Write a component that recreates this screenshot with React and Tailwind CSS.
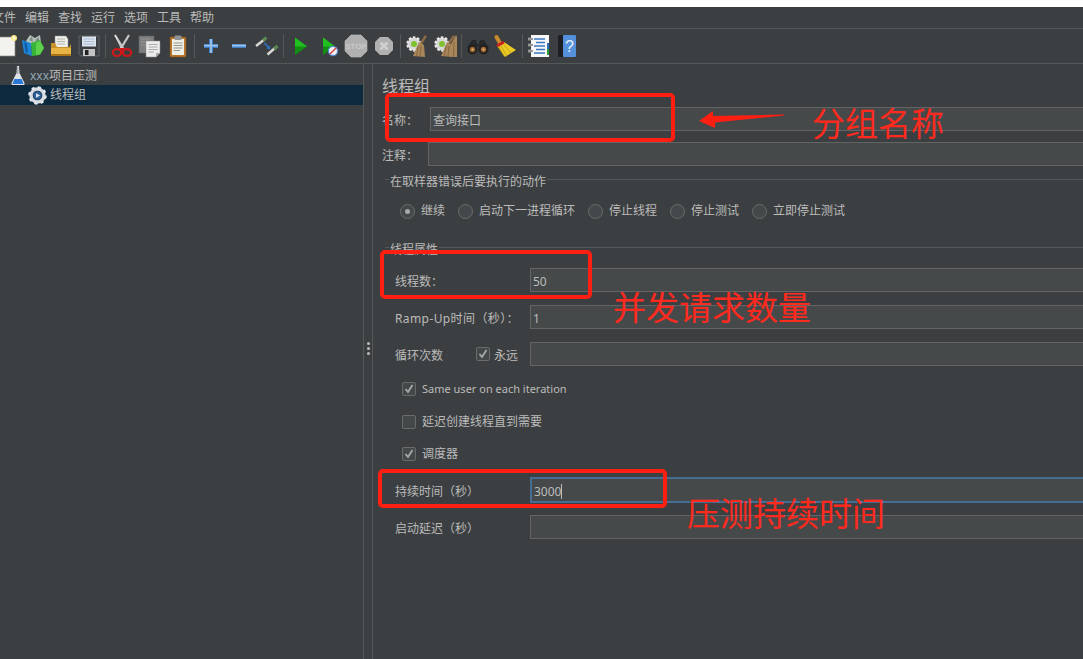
import React from "react";

const cjk = "font-['Noto_Sans','Noto_Sans_CJK_SC',sans-serif]";

function NewIcon() {
  return (
    <svg width="24" height="24" viewBox="0 0 24 24">
      <rect x="2" y="3" width="20" height="19" fill="#f2f2ee" stroke="#8a8a86" strokeWidth="0.7" />
      <circle cx="21" cy="4" r="3" fill="#f7e98a" />
      <circle cx="21" cy="4" r="1.4" fill="#fffbd0" />
    </svg>
  );
}

function TemplatesIcon() {
  return (
    <svg width="24" height="24" viewBox="0 0 24 24">
      <path d="M5 7 L9 1 L14 4 L19 1 L20 9 L10 12Z" fill="#b9c2bd" />
      <path d="M8 6 L11 2 L12 8Z M14 6 L18 3 L18 9Z" fill="#7f8f88" />
      <path d="M1 6 L10 9 L11 22 L3 19Z" fill="#1f86d8" />
      <path d="M3 8 L6 9.5 L7 19 L4.5 18Z" fill="#0e5fa8" />
      <path d="M10 9 L19 6 L23 14 L19 21 L11 22Z" fill="#38b43a" />
      <path d="M15 9 L19 7 L23 14 L19 20 L15 21Z" fill="#5fd04a" />
    </svg>
  );
}

function OpenIcon() {
  return (
    <svg width="24" height="24" viewBox="0 0 24 24">
      <path d="M6 2 H17 L19 5 V14 H6Z" fill="#eeeeea" stroke="#9a9a96" strokeWidth="0.5" />
      <path d="M8 5 H16 M8 7.5 H16 M8 10 H16" stroke="#a5a5a0" strokeWidth="0.8" />
      <path d="M2 9 H6 L8 13 H20 L22 10 V20 Q22 22 20 22 H4 Q2 22 2 20Z" fill="#c8922a" />
      <path d="M2 14 H22 V20 Q22 22 20 22 H4 Q2 22 2 20Z" fill="#e7b445" />
      <path d="M2 20 H22 Q22 22 20 22 H4 Q2 22 2 20Z" fill="#a87416" />
    </svg>
  );
}

function SaveIcon() {
  return (
    <svg width="24" height="24" viewBox="0 0 24 24">
      <path d="M2 2 H22 V22 H4 L2 20Z" fill="#3b3e42" stroke="#6a6d70" strokeWidth="0.8" />
      <rect x="5" y="2.5" width="14" height="10" fill="#dfe6ee" />
      <path d="M6.5 5 H17.5 M6.5 7.5 H17.5 M6.5 10 H17.5" stroke="#9fb7d2" strokeWidth="0.9" />
      <rect x="6" y="15" width="12" height="7" fill="#c4c4c4" />
      <rect x="8" y="16" width="3.5" height="5" fill="#202020" />
    </svg>
  );
}

function CutIcon() {
  return (
    <svg width="24" height="24" viewBox="0 0 24 24">
      <path d="M5 1 L13.5 15 M19 1 L10.5 15" stroke="#c8c8c8" strokeWidth="2.2" />
      <path d="M5 1 L11 14" stroke="#f0f0f0" strokeWidth="0.7" />
      <ellipse cx="7" cy="18.5" rx="4.2" ry="3.4" fill="none" stroke="#d01818" strokeWidth="2.2" />
      <ellipse cx="17" cy="18.5" rx="4.2" ry="3.4" fill="none" stroke="#d01818" strokeWidth="2.2" />
      <path d="M10 15 L14 15" stroke="#d01818" strokeWidth="2" />
    </svg>
  );
}

function CopyIcon() {
  return (
    <svg width="24" height="24" viewBox="0 0 24 24">
      <rect x="1" y="2" width="15" height="17" fill="#7d7d7d" stroke="#666" strokeWidth="0.5" />
      <path d="M3 5 H13 M3 8 H13 M3 11 H13" stroke="#9a9a9a" strokeWidth="0.8" />
      <path d="M8 7 H22 V19 L18 23 H8Z" fill="#ececec" stroke="#8c8c8c" strokeWidth="0.5" />
      <path d="M18 23 V19 H22Z" fill="#a8a8a8" />
      <path d="M10.5 10.5 H19.5 M10.5 13 H19.5 M10.5 15.5 H19.5 M10.5 18 H16" stroke="#9a9a9a" strokeWidth="0.8" />
    </svg>
  );
}

function PasteIcon() {
  return (
    <svg width="24" height="24" viewBox="0 0 24 24">
      <rect x="4" y="3" width="16" height="20" rx="1" fill="#b9772a" stroke="#7d4d17" strokeWidth="0.5" />
      <rect x="6" y="5" width="12" height="16" fill="#efefe8" />
      <rect x="8.5" y="1.5" width="7" height="4.5" rx="1" fill="#8f9296" />
      <path d="M7.5 9 H16.5 M7.5 11.5 H16.5 M7.5 14 H16.5 M7.5 16.5 H14" stroke="#8d8d88" strokeWidth="0.9" />
    </svg>
  );
}

function PlusIcon() {
  return (
    <svg width="24" height="24" viewBox="0 0 24 24">
      <path d="M5 12 H19 M12 5 V19" stroke="#3e7ec2" strokeWidth="4" />
      <path d="M5 11.6 H19 M12 5 V19" stroke="#9cc4ec" strokeWidth="1.8" />
    </svg>
  );
}

function MinusIcon() {
  return (
    <svg width="24" height="24" viewBox="0 0 24 24">
      <path d="M5 12 H19" stroke="#3e7ec2" strokeWidth="4" />
      <path d="M5 11.6 H19" stroke="#9cc4ec" strokeWidth="1.8" />
    </svg>
  );
}

function ToggleIcon() {
  return (
    <svg width="24" height="24" viewBox="0 0 24 24">
      <path d="M1 12 L10 5" stroke="#d8d8d8" strokeWidth="2.4" />
      <path d="M8 6.5 L11.5 3.5" stroke="#5d8a52" strokeWidth="3" />
      <path d="M12.5 20.5 L20 14" stroke="#d8d8d8" strokeWidth="2.4" />
      <path d="M19 15 L22.5 12" stroke="#5d8a52" strokeWidth="3" />
      <path d="M9.5 9 L14 14" stroke="#2f78c8" strokeWidth="1.6" />
      <path d="M15.5 15.5 L11.5 14.5 L14.5 11.5Z" fill="#2f78c8" />
    </svg>
  );
}

function PlayIcon({ noTimer }) {
  return (
    <svg width="24" height="24" viewBox="0 0 24 24">
      <path d="M7 3.5 L19 12.5 L7 21Z" fill="#148f14" />
      <path d="M7 3.5 L19 12.5 L7 12.5Z" fill="#1fc01f" />
      {noTimer && (
        <g>
          <circle cx="17" cy="17" r="4.6" fill="#f2f2f2" stroke="#4f86d0" strokeWidth="1.2" />
          <path d="M14 20 L20 14" stroke="#d83a3a" strokeWidth="1.4" />
        </g>
      )}
    </svg>
  );
}

function StopIcon() {
  return (
    <svg width="24" height="24" viewBox="0 0 24 24">
      <path d="M7 1 H17 L23 7 V17 L17 23 H7 L1 17 V7Z" fill="#b0b0b0" stroke="#c0c0c0" strokeWidth="0.6" />
      <text x="12" y="15" textAnchor="middle" fontSize="8" fontWeight="700" fontFamily="Liberation Sans" fill="#c8c8c8">STOP</text>
    </svg>
  );
}

function ShutdownIcon() {
  return (
    <svg width="24" height="24" viewBox="0 0 24 24">
      <path d="M8 3 H16 L21 8 V16 L16 21 H8 L3 16 V8Z" fill="#b0b0b0" />
      <path d="M8.5 8.5 L15.5 15.5 M15.5 8.5 L8.5 15.5" stroke="#cecece" strokeWidth="3" />
    </svg>
  );
}

function ClearIcon({ all }) {
  return (
    <svg width="24" height="24" viewBox="0 0 24 24">
      <circle cx="9" cy="10" r="6.5" fill="#d6d6d6" stroke="#e8e8e8" strokeWidth="2.4" strokeDasharray="2.5 1.6" />
      <circle cx="9" cy="10" r="3" fill="#7fc02e" />
      <path d="M20 1 L22 2.5 L17 10 L15 8.5Z" fill="#8a6a45" />
      <path d="M14 8 L19 11 L20 23 L8 22 Z" fill="#a98659" />
      <path d="M13 12 L11.5 22 M16 12 L15 22" stroke="#7d5f3b" strokeWidth="0.8" />
      {all && <path d="M23 1 L24 3 L24 23 L18 23 L18 10Z" fill="#a98659" />}
      {all && <path d="M21 8 L20.5 23" stroke="#7d5f3b" strokeWidth="0.8" />}
    </svg>
  );
}

function SearchIcon() {
  return (
    <svg width="24" height="24" viewBox="0 0 24 24">
      <path d="M6 6 H10 L11 10 H13 L14 6 H18 L23 14 H14 L12 12 L10 14 H1Z" fill="#26282a" />
      <circle cx="6.5" cy="15.5" r="5" fill="#222" />
      <circle cx="17.5" cy="15.5" r="5" fill="#222" />
      <circle cx="6.5" cy="15.5" r="2.7" fill="#a3662e" />
      <circle cx="17.5" cy="15.5" r="2.7" fill="#a3662e" />
      <circle cx="6.5" cy="15.5" r="1" fill="#e5c79d" />
      <circle cx="17.5" cy="15.5" r="1" fill="#e5c79d" />
    </svg>
  );
}

function BroomIcon() {
  return (
    <svg width="24" height="24" viewBox="0 0 24 24">
      <path d="M2.5 3 L6.5 10" stroke="#c98a2e" strokeWidth="4" strokeLinecap="round" />
      <path d="M3 12 L10 8 L22 16 L11 23Z" fill="#ecc925" />
      <path d="M3 12 L10 8" stroke="#c82020" strokeWidth="2.6" />
      <path d="M7 12 L13 22 M10 11 L17 19 M5 13 L10 22" stroke="#b99a10" strokeWidth="0.8" />
    </svg>
  );
}

function ListIcon() {
  return (
    <svg width="24" height="24" viewBox="0 0 24 24">
      <rect x="4" y="1" width="18" height="22" fill="#f8f8f8" />
      <rect x="20" y="9" width="2" height="6" fill="#2a6fc0" />
      <rect x="20" y="15" width="2" height="6" fill="#2f9a3a" />
      <path d="M7 5 H18 M9 8.5 H18 M7 12 H18 M9 15.5 H18 M7 19 H18" stroke="#3a78c4" strokeWidth="1.3" />
      <path d="M1 5 H6 M1 11 H6 M1 17 H6" stroke="#d8d8d8" strokeWidth="2.6" />
      <path d="M1 5 H6 M1 11 H6 M1 17 H6" stroke="#333" strokeWidth="0.8" />
    </svg>
  );
}

function HelpIcon() {
  return (
    <svg width="24" height="24" viewBox="0 0 24 24">
      <rect x="3" y="1" width="18" height="22" rx="1.5" fill="#1d1f22" />
      <rect x="8" y="1" width="13" height="22" rx="1" fill="#5591db" />
      <text x="14.5" y="18" textAnchor="middle" fontSize="16" fontFamily="Liberation Sans" fill="#e8f0fb">?</text>
    </svg>
  );
}

function FlaskIcon() {
  return (
    <svg width="14" height="19" viewBox="0 0 14 19">
      <path d="M6 0 L8 0 L8.5 7 L13.5 17 Q14 19 12.5 19 L1.5 19 Q0 19 0.5 17 L5.5 7Z" fill="#dfe3e8" />
      <path d="M3.4 13 H10.6 L12.6 18 H1.4Z" fill="#2a78d8" />
      <path d="M6.8 1 V8" stroke="#8b929a" strokeWidth="1" />
    </svg>
  );
}

function GearIcon() {
  return (
    <svg width="19" height="19" viewBox="0 0 19 19">
      <circle cx="9.5" cy="9.5" r="6.5" fill="none" stroke="#d8dde3" strokeWidth="3.4" />
      <circle cx="9.5" cy="9.5" r="8.2" fill="none" stroke="#e4e8ec" strokeWidth="2.2" strokeDasharray="3.2 3.24" />
      <circle cx="9.5" cy="9.5" r="4.2" fill="#2f5f98" />
      <path d="M8 7.2 L12.2 9.5 L8 11.8Z" fill="#dbe6f2" />
    </svg>
  );
}

const toolbar = [
  [NewIcon, TemplatesIcon, OpenIcon, SaveIcon],
  [CutIcon, CopyIcon, PasteIcon],
  [PlusIcon, MinusIcon, ToggleIcon],
  [PlayIcon, () => <PlayIcon noTimer />, StopIcon, ShutdownIcon],
  [ClearIcon, () => <ClearIcon all />],
  [SearchIcon, BroomIcon],
  [ListIcon, HelpIcon],
];

function Toolbar() {
  return (
    <div className="flex h-[35px] items-center ml-[-9px] border-b border-[#555859]">
      {toolbar.map((group, i) => (
        <div key={i} className="flex items-center">
          {i > 0 && <div className="mx-[2px] h-[24px] w-px bg-[#555859]" />}
          {group.map((Icon, j) => (
            <div key={j} className="flex w-[28px] justify-center">
              <Icon />
            </div>
          ))}
        </div>
      ))}
    </div>
  );
}

function Field({ label, value, focused, labelClass = "w-[148px] pl-[13px]" }) {
  return (
    <div className="flex items-center">
      <span className={`shrink-0 pt-[3px] ${labelClass}`}>{label}</span>
      <TextBox value={value} focused={focused} />
    </div>
  );
}

function TextBox({ value, focused }) {
  return (
    <div
      className={`mr-[-10px] flex flex-1 items-center bg-[#45494a] pt-[3px] ${
        focused ? "h-[26px] border-2 border-[#466d94] pl-[2px]" : "h-[24px] border border-[#646464] pl-[2px]"
      }`}
    >
      {value}
      {focused && <span className="h-[15px] w-px bg-[#bbbbbb]" />}
    </div>
  );
}

function Radio({ label, checked }) {
  return (
    <div className="flex items-center gap-[6px]">
      <span className="flex h-[15px] w-[15px] items-center justify-center rounded-full border border-[#6b6b6b] bg-[#43494a]">
        {checked && <span className="h-[5px] w-[5px] rounded-full bg-[#a9a9a9]" />}
      </span>
      <span>{label}</span>
    </div>
  );
}

function Check({ label, checked, latin, tight }) {
  return (
    <div className={`flex items-center ${tight ? "gap-[4px]" : "gap-[6px]"}`}>
      <span className="flex h-[14px] w-[14px] items-center justify-center rounded-[2px] border border-[#6b6b6b] bg-[#43494a]">
        {checked && (
          <svg width="10" height="10" viewBox="0 0 10 10">
            <path d="M1.5 5 L4 8 L8.5 1" fill="none" stroke="#a9a9a9" strokeWidth="1.8" />
          </svg>
        )}
      </span>
      <span className={latin ? "text-[11px]" : tight ? "pt-[4px]" : ""}>{label}</span>
    </div>
  );
}

function Legend({ children }) {
  return (
    <div className="ml-[3px] flex h-[16px] items-center">
      <div className="h-px w-[4px] bg-[#555859]" />
      <span className="px-px pt-[5px]">{children}</span>
      <div className="h-px flex-1 bg-[#555859]" />
    </div>
  );
}

export default function App() {
  return (
    <div className={`relative h-[659px] w-[1083px] overflow-hidden bg-[#3c3f41] text-[12px] text-[#bbbbbb] ${cjk}`}>
      <div className="h-[7px] bg-white" />
      <div className="flex h-[22px] items-center gap-[9px] ml-[-8px] pt-[1px] border-b border-[#555859]">
        {["文件", "编辑", "查找", "运行", "选项", "工具", "帮助"].map((m) => (
          <span key={m}>{m}</span>
        ))}
      </div>
      <Toolbar />
      <div className="flex h-[595px]">
        <div className="w-[363px] pt-[2px]">
          <div className="flex h-[19px] items-center gap-[5px] pl-[11px]">
            <FlaskIcon />
            <span>
              <span className="text-[#8fa6b8]">xxx</span>项目压测
            </span>
          </div>
          <div className="flex h-[20px] items-center gap-[3px] bg-[#0d293e] pl-[28px]">
            <GearIcon />
            <span>线程组</span>
          </div>
        </div>
        <div className="flex w-[10px] items-center justify-center border-x border-[#555859] pb-[27px]">
          <div className="flex flex-col gap-[2px]">
            <span className="h-[3px] w-[3px] rounded-full bg-[#bbbbbb]" />
            <span className="h-[3px] w-[3px] rounded-full bg-[#bbbbbb]" />
            <span className="h-[3px] w-[3px] rounded-full bg-[#bbbbbb]" />
          </div>
        </div>
        <div className="flex-1 pl-[9px] pt-[12px]">
          <div className="h-[31px] text-[16px] leading-[20px]">线程组</div>
          <Field label="名称：" value="查询接口" labelClass="w-[48px]" />
          <div className="mt-[11px] flex items-center">
            <span className="w-[46px] shrink-0 pt-[3px]">注释：</span>
            <TextBox />
          </div>
          <div className="mt-[5px]">
            <Legend>在取样器错误后要执行的动作</Legend>
          </div>
          <div className="ml-[18px] mt-[14px] flex h-[20px] items-center gap-[13px]">
            <Radio label="继续" checked />
            <Radio label="启动下一进程循环" />
            <Radio label="停止线程" />
            <Radio label="停止测试" />
            <Radio label="立即停止测试" />
          </div>
          <div className="mt-[18px]">
            <Legend>线程属性</Legend>
          </div>
          <div className="mt-[13px] flex flex-col gap-[13px]">
            <Field label="线程数：" value="50" />
            <Field label={<span className="tracking-[0.4px]">Ramp-Up时间（秒）：</span>} value="1" />
            <div className="flex items-center">
              <div className="flex w-[148px] shrink-0 items-center pl-[13px]">
                <span className="w-[81px] pt-[4px]">循环次数</span>
                <Check label="永远" checked tight />
              </div>
              <TextBox />
            </div>
          </div>
          <div className="ml-[20px] mt-[15px] flex flex-col gap-[16.5px]">
            <div className="h-[16px] leading-[16px]">
              <Check label="Same user on each iteration" checked latin />
            </div>
            <div className="h-[16px] leading-[16px]">
              <Check label="延迟创建线程直到需要" />
            </div>
            <div className="h-[16px] leading-[16px]">
              <Check label="调度器" checked />
            </div>
          </div>
          <div className="mt-[15px] flex flex-col gap-[12px]">
            <Field label="持续时间（秒）" value="3000" focused />
            <Field label="启动延迟（秒）" />
          </div>
        </div>
      </div>

      {/* red annotations drawn on top of the screenshot */}
      <div className="absolute left-[385px] top-[93px] h-[49px] w-[290px] rounded-[5px] border-[4px] border-[#ff1f12]" />
      <div className="absolute left-[380px] top-[250px] h-[49px] w-[212px] rounded-[5px] border-[4px] border-[#ff1f12]" />
      <div className="absolute left-[378px] top-[469px] h-[39px] w-[289px] rounded-[5px] border-[4px] border-[#ff1f12]" />
      <svg className="absolute left-[699px] top-[110px]" width="85" height="19" viewBox="0 0 85 19">
        <path d="M0 11 L14 1 L14 6 L85 4.5 L85 5.5 L16 12.5 L16 18Z" fill="#ff1f12" />
      </svg>
      <span className="absolute left-[812px] top-[101px] text-[33px] leading-[46px] text-[#ff2a1e]">分组名称</span>
      <span className="absolute left-[613px] top-[285px] text-[33px] leading-[46px] text-[#ff2a1e]">并发请求数量</span>
      <span className="absolute left-[687px] top-[491px] text-[33px] leading-[46px] text-[#ff2a1e]">压测持续时间</span>
    </div>
  );
}
